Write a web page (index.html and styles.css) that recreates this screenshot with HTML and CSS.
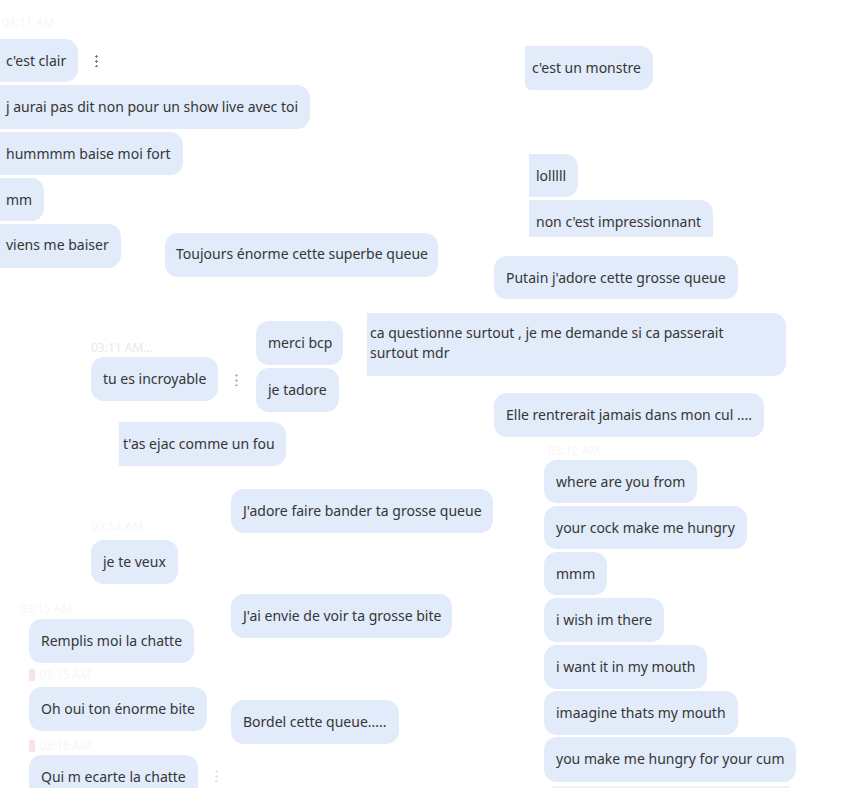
FILE: index.html
```html
<!DOCTYPE html>
<html>
	<head>
		<title>Messages</title>
		<link rel="stylesheet" href="styles.css">
	</head>
	<body>
		<div id="board">
			<span class="stamp" id="stampTop">03:11 AM</span>
			<span class="stamp" id="stampLeft">03:11 AM...</span>
			<span class="stamp" id="stampRight">03:12 AM</span>
			<span class="stamp" id="stampMid">03:14 AM</span>
			<span class="stamp" id="stampLow">03:15 AM</span>
			<span class="stamp" id="stampOh"><i class="mark"></i>03:15 AM</span>
			<span class="stamp" id="stampQui"><i class="mark"></i>03:16 AM</span>

			<div class="bubble cut" id="m1">c'est clair</div>
			<div class="dots" id="dots1"></div>
			<div class="bubble cut" id="m2">j aurai pas dit non pour un show live avec toi</div>
			<div class="bubble cut" id="m3">hummmm baise moi fort</div>
			<div class="bubble cut" id="m4">mm</div>
			<div class="bubble cut" id="m5">viens me baiser</div>
			<div class="bubble" id="m6">Toujours énorme cette superbe queue</div>

			<div class="bubble cut" id="m7">c'est un monstre</div>
			<div class="bubble cut" id="m8">lolllll</div>
			<div class="bubble cut" id="m9">non c'est impressionnant</div>
			<div class="bubble" id="m10">Putain j'adore cette grosse queue</div>

			<div class="bubble" id="m11">merci bcp</div>
			<div class="bubble" id="m12">je tadore</div>
			<div class="bubble" id="m13">tu es incroyable</div>
			<div class="dots faint" id="dots2"></div>
			<div class="bubble cut" id="m14">t'as ejac comme un fou</div>
			<div class="bubble cut" id="m15">ca questionne surtout , je me demande si ca passerait<br>surtout mdr</div>
			<div class="bubble" id="m16">Elle rentrerait jamais dans mon cul ....</div>

			<div class="bubble" id="m17">J'adore faire bander ta grosse queue</div>
			<div class="bubble" id="m18">je te veux</div>
			<div class="bubble" id="m19">J'ai envie de voir ta grosse bite</div>
			<div class="bubble" id="m20">Bordel cette queue.....</div>

			<div class="bubble" id="m21">where are you from</div>
			<div class="bubble" id="m22">your cock make me hungry</div>
			<div class="bubble" id="m23">mmm</div>
			<div class="bubble" id="m24">i wish im there</div>
			<div class="bubble" id="m25">i want it in my mouth</div>
			<div class="bubble" id="m26">imaagine thats my mouth</div>
			<div class="bubble" id="m27">you make me hungry for your cum</div>
			<div id="nextEdge"></div>

			<div class="bubble" id="m28">Remplis moi la chatte</div>
			<div class="bubble" id="m29">Oh oui ton énorme bite</div>
			<div class="bubble" id="m30">Qui m ecarte la chatte</div>
			<div class="dots faintest" id="dots3"></div>
		</div>
	</body>
</html>
```

FILE: styles.css
```css
body {
	margin: 0;
	background-color: #FFFFFF;
	font-family: "Noto Sans", "Open Sans", sans-serif;
}
#board {
	position: relative;
	width: 851px;
	height: 788px;
	overflow: hidden;
}
.bubble {
	position: absolute;
	box-sizing: border-box;
	height: 44px;
	padding: 12px 12px;
	line-height: 20px;
	font-size: 14px;
	color: #363636;
	background-color: #E1EBF9;
	border-radius: 13px;
	white-space: nowrap;
}
.cut {
	border-top-left-radius: 0;
	border-bottom-left-radius: 0;
}
.stamp {
	position: absolute;
	display: flex;
	align-items: center;
	gap: 4px;
	font-size: 12px;
	color: #F6F6F6;
}
.mark {
	display: inline-block;
	width: 6px;
	height: 12px;
	background-color: #F9E4E4;
}
.dots {
	position: absolute;
	width: 3px;
	height: 13px;
	background-image: radial-gradient(circle, #7A7A7A 1.2px, transparent 1.4px);
	background-size: 3px 5px;
}
.faint {
	opacity: 0.55;
}
.faintest {
	opacity: 0.2;
}

/* timestamps */
#stampTop { left: 2px; top: 14px; }
#stampLeft { left: 91px; top: 339px; color: #E8E8E8; }
#stampRight { left: 548px; top: 442px; }
#stampMid { left: 91px; top: 518px; }
#stampLow { left: 20px; top: 600px; }
#stampOh { left: 29px; top: 666px; }
#stampQui { left: 29px; top: 737px; }

/* left column */
#m1 { left: 0; top: 39px; height: 43px; padding-left: 6px; }
#dots1 { left: 95px; top: 54px; }
#m2 { left: 0; top: 85px; padding-left: 6px; }
#m3 { left: 0; top: 132px; height: 43px; padding-left: 6px; }
#m4 { left: 0; top: 178px; height: 43px; padding-left: 6px; }
#m5 { left: 0; top: 224px; padding-left: 6px; padding-top: 11px; }
#m6 { left: 165px; top: 233px; width: 273px; padding-left: 11px; padding-top: 11px; }

/* top right */
#m7 { left: 525px; top: 46px; width: 128px; padding-left: 7px; border-bottom-left-radius: 6px; }
#m8 { left: 529px; top: 154px; height: 43px; width: 49px; padding-left: 7px; }
#m9 { left: 529px; top: 200px; height: 37px; width: 184px; padding-left: 7px; border-bottom-right-radius: 0; }
#m10 { left: 494px; top: 256px; height: 43px; width: 244px; }

/* middle */
#m11 { left: 256px; top: 321px; width: 87px; }
#m12 { left: 256px; top: 368px; width: 83px; }
#m13 { left: 91px; top: 357px; width: 127px; }
#dots2 { left: 235px; top: 373px; }
#m14 { left: 119px; top: 422px; width: 167px; padding-left: 4px; }
#m15 { left: 367px; top: 313px; width: 419px; height: 63px; padding: 10px 12px 13px 3px; }
#m16 { left: 494px; top: 393px; width: 270px; }

#m17 { left: 231px; top: 489px; width: 262px; }
#m18 { left: 91px; top: 540px; width: 87px; }
#m19 { left: 231px; top: 594px; width: 221px; }
#m20 { left: 231px; top: 700px; width: 168px; }

/* right column */
#m21 { left: 544px; top: 460px; height: 43px; width: 153px; }
#m22 { left: 544px; top: 506px; height: 43px; width: 203px; }
#m23 { left: 544px; top: 552px; height: 43px; width: 63px; }
#m24 { left: 544px; top: 598px; width: 120px; }
#m25 { left: 544px; top: 645px; width: 163px; }
#m26 { left: 544px; top: 691px; width: 194px; }
#m27 { left: 544px; top: 737px; height: 45px; width: 252px; }
#nextEdge {
	position: absolute;
	left: 552px;
	top: 786px;
	width: 238px;
	height: 2px;
	background-color: #EEF2F8;
}

/* bottom left */
#m28 { left: 29px; top: 619px; width: 165px; }
#m29 { left: 29px; top: 687px; width: 178px; }
#m30 { left: 29px; top: 755px; width: 169px; }
#dots3 { left: 215px; top: 769px; }
```
